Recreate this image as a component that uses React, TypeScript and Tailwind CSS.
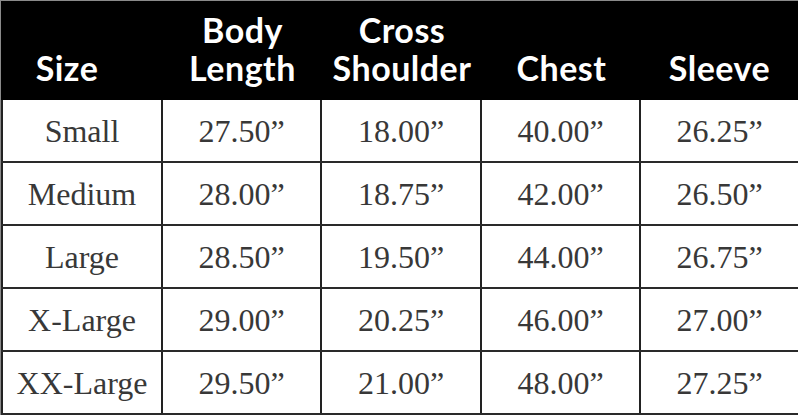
import React from 'react'

const headers: string[][] = [
  ['Size'],
  ['Body', 'Length'],
  ['Cross', 'Shoulder'],
  ['Chest'],
  ['Sleeve'],
]

const rows: string[][] = [
  ['Small', '27.50”', '18.00”', '40.00”', '26.25”'],
  ['Medium', '28.00”', '18.75”', '42.00”', '26.50”'],
  ['Large', '28.50”', '19.50”', '44.00”', '26.75”'],
  ['X-Large', '29.00”', '20.25”', '46.00”', '27.00”'],
  ['XX-Large', '29.50”', '21.00”', '48.00”', '27.25”'],
]

const cols = 'grid grid-cols-[162px_159px_160px_159px_157px]'

const App: React.FC = () => {
  return (
    <div className="w-[800px] h-[415px] bg-white overflow-hidden">
      <div className="w-[798px] border-t border-l border-[#8a8a8a]">
        {/* Header */}
        <div
          className={`${cols} h-[99px] bg-black text-white font-bold text-[34px] leading-[38px] tracking-[0.5px]`}
          style={{ fontFamily: 'Lato, "Open Sans", sans-serif' }}
        >
          {headers.map((h, i) => (
            <div
              key={i}
              className={`flex flex-col items-center justify-end pb-[13px] ${i === 0 ? 'pr-[30px]' : ''}`}
            >
              {h.map((line) => (
                <span key={line}>{line}</span>
              ))}
            </div>
          ))}
        </div>

        {/* Body */}
        {rows.map((row, r) => (
          <div
            key={r}
            className={`${cols} h-[63px] border-b-2 border-[#2a2a2a] text-[#383838] text-[32px]`}
            style={{ fontFamily: '"Liberation Serif", "DejaVu Serif", serif' }}
          >
            {row.map((cell, c) => (
              <div
                key={c}
                className={`flex items-center justify-center border-[#222] ${c === 0 ? 'border-l-2' : ''} ${c < 4 ? 'border-r-2' : ''}`}
              >
                {cell}
              </div>
            ))}
          </div>
        ))}
      </div>
    </div>
  )
}

export default App
